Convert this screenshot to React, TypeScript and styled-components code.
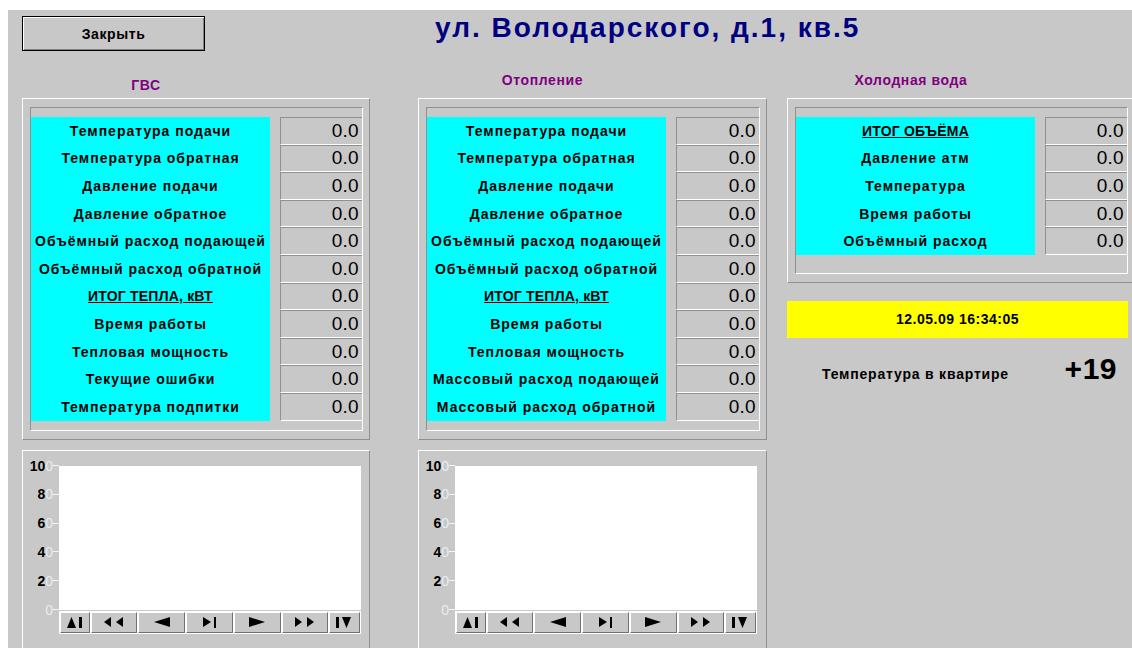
import React from 'react';
import styled, { createGlobalStyle } from 'styled-components';

const FONT = `'Liberation Sans', Arial, sans-serif`;
const GRAY = '#c8c8c8';
const SHADE = '#909090';

const GlobalStyle = createGlobalStyle`
  html, body {
    margin: 0;
    background: #fff;
  }
  body {
    padding: 10px 0 0 8px;
  }
  * {
    box-sizing: border-box;
  }
`;

type Row = { text: string; total?: boolean };

const HOT_WATER: Row[] = [
  { text: 'Температура подачи' },
  { text: 'Температура обратная' },
  { text: 'Давление подачи' },
  { text: 'Давление обратное' },
  { text: 'Объёмный расход подающей' },
  { text: 'Объёмный расход обратной' },
  { text: 'ИТОГ ТЕПЛА, кВТ', total: true },
  { text: 'Время работы' },
  { text: 'Тепловая мощность' },
  { text: 'Текущие ошибки' },
  { text: 'Температура подпитки' },
];

const HEATING: Row[] = [
  { text: 'Температура подачи' },
  { text: 'Температура обратная' },
  { text: 'Давление подачи' },
  { text: 'Давление обратное' },
  { text: 'Объёмный расход подающей' },
  { text: 'Объёмный расход обратной' },
  { text: 'ИТОГ ТЕПЛА, кВТ', total: true },
  { text: 'Время работы' },
  { text: 'Тепловая мощность' },
  { text: 'Массовый расход подающей' },
  { text: 'Массовый расход обратной' },
];

const COLD_WATER: Row[] = [
  { text: 'ИТОГ ОБЪЁМА', total: true },
  { text: 'Давление атм' },
  { text: 'Температура' },
  { text: 'Время работы' },
  { text: 'Объёмный расход' },
];

const AXIS = ['100', '80', '60', '40', '20', '0'];

type GlyphKind = 'first' | 'prevPage' | 'prev' | 'next' | 'play' | 'nextPage' | 'last';
const NAV: { kind: GlyphKind; grow: number }[] = [
  { kind: 'first', grow: 29 },
  { kind: 'prevPage', grow: 47 },
  { kind: 'prev', grow: 47 },
  { kind: 'next', grow: 47 },
  { kind: 'play', grow: 47 },
  { kind: 'nextPage', grow: 46 },
  { kind: 'last', grow: 31 },
];

// small black marks on the record navigator buttons
const Glyph = ({ kind }: { kind: GlyphKind }) => {
  switch (kind) {
    case 'first':
      return (
        <svg width="16" height="12" viewBox="0 0 16 12">
          <polygon points="0,12 4.5,1 9,12" fill="#000" />
          <rect x="12" y="1" width="3" height="11" fill="#000" />
        </svg>
      );
    case 'prevPage':
      return (
        <svg width="20" height="12" viewBox="0 0 20 12">
          <polygon points="0,6 7,1 7,11" fill="#000" />
          <polygon points="12,6 19,1 19,11" fill="#000" />
        </svg>
      );
    case 'prev':
      return (
        <svg width="16" height="12" viewBox="0 0 16 12">
          <polygon points="0,6 16,1 16,11" fill="#000" />
        </svg>
      );
    case 'next':
      return (
        <svg width="14" height="12" viewBox="0 0 14 12">
          <polygon points="0,1 0,11 8,6" fill="#000" />
          <rect x="11" y="1" width="2" height="11" fill="#000" />
        </svg>
      );
    case 'play':
      return (
        <svg width="16" height="12" viewBox="0 0 16 12">
          <polygon points="0,1 0,11 16,6" fill="#000" />
        </svg>
      );
    case 'nextPage':
      return (
        <svg width="20" height="12" viewBox="0 0 20 12">
          <polygon points="0,1 0,11 7,6" fill="#000" />
          <polygon points="12,1 12,11 19,6" fill="#000" />
        </svg>
      );
    default:
      return (
        <svg width="16" height="12" viewBox="0 0 16 12">
          <rect x="0" y="1" width="3" height="11" fill="#000" />
          <polygon points="6,1 15,1 10.5,12" fill="#000" />
        </svg>
      );
  }
};

const Readings = ({ rows }: { rows: Row[] }) => (
  <Table>
    {rows.map((row) => (
      <React.Fragment key={row.text}>
        <Label total={row.total}>{row.text}</Label>
        <Value>0.0</Value>
      </React.Fragment>
    ))}
  </Table>
);

const Chart = () => (
  <ChartFrame>
    <ChartGrid>
      <Axis>
        {AXIS.map((mark) => (
          <Tick key={mark}>
            <TickText>
              {mark.slice(0, -1)}
              <Faded>{mark.slice(-1)}</Faded>
            </TickText>
            <TickLine />
          </Tick>
        ))}
      </Axis>
      <Plot />
      <Navigator>
        {NAV.map((b) => (
          <NavButton key={b.kind} style={{ flexGrow: b.grow }}>
            <Glyph kind={b.kind} />
          </NavButton>
        ))}
      </Navigator>
    </ChartGrid>
  </ChartFrame>
);

export default function App() {
  return (
    <>
      <GlobalStyle />
      <Screen>
        <Header>
          <CloseButton>Закрыть</CloseButton>
          <Address>ул. Володарского, д.1, кв.5</Address>
        </Header>
        <Columns>
          <Column width={348}>
            <Caption drop={5}>ГВС</Caption>
            <Frame>
              <Inset>
                <Readings rows={HOT_WATER} />
              </Inset>
            </Frame>
            <Chart />
          </Column>
          <Column width={349} offset={48}>
            <Caption>Отопление</Caption>
            <Frame>
              <Inset>
                <Readings rows={HEATING} />
              </Inset>
            </Frame>
            <Chart />
          </Column>
          <Column width={348} offset={20}>
            <Caption>Холодная вода</Caption>
            <Frame>
              <Inset tall>
                <Readings rows={COLD_WATER} />
              </Inset>
            </Frame>
            <Clock>12.05.09 16:34:05</Clock>
            <Room>
              <RoomLabel>Температура в квартире</RoomLabel>
              <RoomValue>+19</RoomValue>
            </Room>
          </Column>
        </Columns>
      </Screen>
    </>
  );
}

const Screen = styled.div`
  width: calc(100vw - 8px);
  height: 638px;
  overflow: hidden;
  background: ${GRAY};
  font-family: ${FONT};
  color: #000;
`;

const Header = styled.div`
  display: flex;
  align-items: flex-start;
  height: 41px;
  padding-left: 14px;
`;

const CloseButton = styled.button`
  margin-top: 6px;
  width: 183px;
  height: 35px;
  background: ${GRAY};
  border: 1px solid #000;
  box-shadow: inset 1px 1px 0 #fff, inset -1px -1px 0 #808080;
  font-family: ${FONT};
  font-weight: 700;
  font-size: 14px;
  letter-spacing: 0.6px;
  color: #000;
  padding: 0;
`;

const Address = styled.div`
  margin-left: 230px;
  margin-top: 2px;
  font-size: 28px;
  line-height: 32px;
  font-weight: 700;
  letter-spacing: 2px;
  color: #000080;
  white-space: nowrap;
`;

const Columns = styled.div`
  display: flex;
  align-items: flex-start;
  padding-left: 14px;
`;

const Column = styled.div<{ width: number; offset?: number }>`
  flex: 0 0 ${(p) => p.width}px;
  margin-left: ${(p) => p.offset || 0}px;
  display: flex;
  flex-direction: column;
`;

const Caption = styled.div<{ drop?: number }>`
  height: 47px;
  padding-top: ${(p) => 21 + (p.drop || 0)}px;
  padding-right: 100px;
  text-align: center;
  font-size: 14px;
  line-height: 16px;
  font-weight: 700;
  letter-spacing: 0.6px;
  color: #800080;
`;

const Frame = styled.div`
  padding: 8px 6px 8px 7px;
  border-top: 1px solid #fff;
  border-left: 1px solid #fff;
  border-right: 1px solid ${SHADE};
  border-bottom: 1px solid ${SHADE};
`;

const Inset = styled.div<{ tall?: boolean }>`
  padding: 9px 0 ${(p) => (p.tall ? 18 : 9)}px 0;
  border-top: 1px solid ${SHADE};
  border-left: 1px solid ${SHADE};
  border-right: 1px solid #fff;
  border-bottom: 1px solid #fff;
`;

const Table = styled.div`
  display: grid;
  grid-template-columns: 239px 1fr;
  grid-auto-rows: 27.6px;
  column-gap: 10px;
`;

const Label = styled.div<{ total?: boolean }>`
  background: #00ffff;
  display: flex;
  align-items: center;
  justify-content: center;
  font-size: 14px;
  font-weight: 700;
  letter-spacing: ${(p) => (p.total ? 0.2 : 1)}px;
  text-decoration: ${(p) => (p.total ? 'underline' : 'none')};
  white-space: nowrap;
`;

const Value = styled.div`
  display: flex;
  align-items: center;
  justify-content: flex-end;
  padding-right: 3px;
  border-top: 1px solid ${SHADE};
  border-left: 1px solid ${SHADE};
  border-bottom: 1px solid #fff;
  font-size: 19px;
  letter-spacing: 0.3px;
`;

const ChartFrame = styled.div`
  margin-top: 10px;
  height: 220px;
  padding-top: 15px;
  border-top: 1px solid #fff;
  border-left: 1px solid #fff;
  border-right: 1px solid ${SHADE};
`;

const ChartGrid = styled.div`
  display: grid;
  grid-template-columns: 36px 302px;
  grid-template-rows: 144px 24px;
`;

const Axis = styled.div`
  grid-row: 1;
  grid-column: 1;
  margin: -7px 0;
  display: flex;
  flex-direction: column;
  justify-content: space-between;
`;

const Tick = styled.div`
  height: 14px;
  display: flex;
  align-items: center;
  justify-content: flex-end;
`;

const TickText = styled.span`
  font-size: 14px;
  line-height: 14px;
  font-weight: 700;
`;

const Faded = styled.span`
  color: #ececec;
  font-weight: 400;
`;

const TickLine = styled.span`
  width: 6px;
  height: 1px;
  background: #f4f4f4;
`;

const Plot = styled.div`
  grid-row: 1;
  grid-column: 2;
  background: #fff;
`;

const Navigator = styled.div`
  grid-row: 2;
  grid-column: 2;
  display: flex;
  gap: 1px;
  padding: 1px;
  margin-top: 1px;
  height: 23px;
  background: #fff;
`;

const NavButton = styled.div`
  flex-basis: 0;
  display: flex;
  align-items: center;
  justify-content: center;
  background: ${GRAY};
  border-top: 1px solid #fff;
  border-left: 1px solid #fff;
  border-right: 1px solid #707070;
  border-bottom: 1px solid #707070;
`;

const Clock = styled.div`
  margin-top: 18px;
  width: 341px;
  height: 37px;
  background: #ffff00;
  text-align: center;
  line-height: 37px;
  font-size: 14px;
  font-weight: 700;
  letter-spacing: 0.5px;
`;

const Room = styled.div`
  display: flex;
  align-items: baseline;
  justify-content: space-between;
  margin-top: 16px;
  padding: 0 18px 0 35px;
`;

const RoomLabel = styled.span`
  font-size: 14px;
  font-weight: 700;
  letter-spacing: 0.8px;
`;

const RoomValue = styled.span`
  font-size: 30px;
  line-height: 30px;
  font-weight: 700;
  letter-spacing: 0.5px;
`;
